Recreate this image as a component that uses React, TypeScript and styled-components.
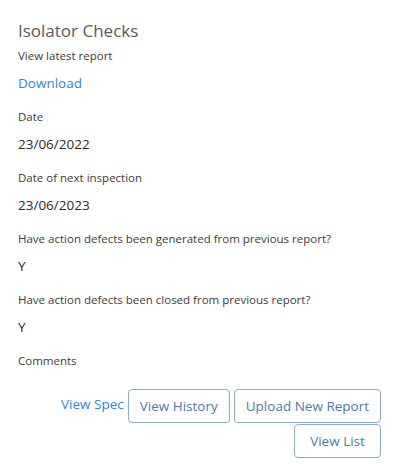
import styled, { createGlobalStyle } from "styled-components";

const GlobalStyle = createGlobalStyle`
  html, body {
    margin: 0;
    padding: 0;
    background: #ffffff;
  }
  body {
    font-family: "Open Sans", "Noto Sans", sans-serif;
    color: #333333;
  }
`;

const Card = styled.div`
  box-sizing: border-box;
  width: 400px;
  min-height: 475px;
  padding: 19px 19px 16px 18px;
  background: #ffffff;
  border-radius: 12px;
`;

const Title = styled.h2`
  margin: 0 0 4px;
  font-size: 17px;
  line-height: 24px;
  font-weight: 400;
  color: #5a5a5a;
`;

const Label = styled.div`
  font-size: 11.5px;
  line-height: 18px;
  color: #3c3c3c;
  margin-bottom: 8px;
`;

const Value = styled.div`
  font-size: 13.5px;
  line-height: 20px;
  color: #2a2a2a;
  margin-bottom: 15px;
  min-height: 20px;
`;

const Link = styled.a`
  color: #2b88d8;
  text-decoration: none;
  cursor: pointer;
`;

const Actions = styled.div`
  display: flex;
  flex-wrap: wrap;
  justify-content: flex-end;
  align-items: center;
  column-gap: 4px;
  row-gap: 1px;
  margin-top: 19px;
`;

const TextLink = styled(Link)`
  font-size: 13.5px;
  line-height: 20px;
  margin-bottom: 4px;
`;

const Button = styled.button<{ $wide?: boolean }>`
  font-family: inherit;
  font-size: 13.5px;
  height: 34px;
  padding: 0 11px;
  min-width: ${(p) => (p.$wide ? "87px" : "0")};
  background: #ffffff;
  color: #5079a6;
  border: 1px solid #8eabca;
  border-radius: 4px;
  cursor: pointer;
`;

const fields = [
  { label: "Date", value: "23/06/2022" },
  { label: "Date of next inspection", value: "23/06/2023" },
  { label: "Have action defects been generated from previous report?", value: "Y" },
  { label: "Have action defects been closed from previous report?", value: "Y" },
];

export default function App() {
  return (
    <>
      <GlobalStyle />
      <Card>
        <Title>Isolator Checks</Title>
        <Label>View latest report</Label>
        <Value>
          <Link>Download</Link>
        </Value>
        {fields.map((f) => (
          <div key={f.label}>
            <Label>{f.label}</Label>
            <Value>{f.value}</Value>
          </div>
        ))}
        <Label>Comments</Label>
        <Actions>
          <TextLink>View Spec</TextLink>
          <Button>View History</Button>
          <Button>Upload New Report</Button>
          <Button $wide>View List</Button>
        </Actions>
      </Card>
    </>
  );
}
